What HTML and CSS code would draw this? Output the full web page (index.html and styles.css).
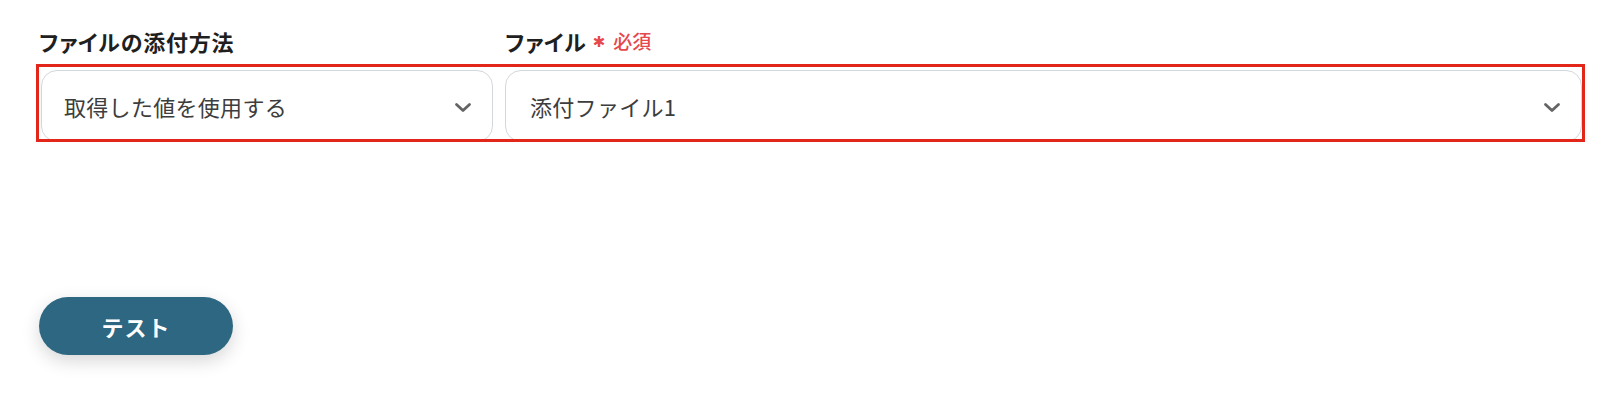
FILE: index.html
```html
<!DOCTYPE html>
<html lang="ja">
<head>
<meta charset="utf-8">
<link rel="stylesheet" href="styles.css">
</head>
<body>
<div class="page">
  <div class="labels">
    <div class="label label-method">ファイルの添付方法</div>
    <div class="label">ファイル<span class="req"><span class="star">✱</span>必須</span></div>
  </div>
  <div class="fields">
    <div class="select select-method">
      <span class="value">取得した値を使用する</span>
      <svg class="chev" width="18" height="11" viewBox="0 0 18 11"><path d="M2.5 2.5l6.5 6 6.5-6" fill="none" stroke="#646464" stroke-width="2.8" stroke-linecap="round" stroke-linejoin="round"/></svg>
    </div>
    <div class="select select-file">
      <span class="value">添付ファイル1</span>
      <svg class="chev" width="18" height="11" viewBox="0 0 18 11"><path d="M2.5 2.5l6.5 6 6.5-6" fill="none" stroke="#646464" stroke-width="2.8" stroke-linecap="round" stroke-linejoin="round"/></svg>
    </div>
  </div>
  <div class="actions">
    <button class="btn">テスト</button>
  </div>
</div>
</body>
</html>
```
FILE: styles.css
```css
* { box-sizing: border-box; }
html, body { margin: 0; padding: 0; background: #fff; }
body {
  font-family: "Noto Sans CJK JP", "Noto Sans", sans-serif;
  width: 1600px;
  height: 408px;
  overflow: hidden;
}
.page {
  padding: 28px 15px 0 36px;
  display: flex;
  flex-direction: column;
}
.labels {
  display: flex;
  align-items: center;
  height: 26px;
  padding-left: 3px;
  margin-bottom: 10px;
}
.label {
  font-size: 22px;
  font-weight: 700;
  color: #1f1f1f;
  line-height: 26px;
  font-feature-settings: "palt";
  letter-spacing: 0.8px;
  display: flex;
  align-items: center;
}
.label-method { width: 466px; }
.req {
  color: #e5484d;
  font-size: 19px;
  font-weight: 500;
  letter-spacing: 0;
  margin-left: 6px;
  display: flex;
  align-items: center;
}
.star {
  font-family: "DejaVu Sans", sans-serif;
  font-size: 15px;
  margin-right: 8px;
  line-height: 1;
  position: relative;
  top: 1px;
}
.fields {
  border: 3px solid #e2261a;
  height: 78px;
  padding: 3px 0 0 2px;
  display: grid;
  grid-template-columns: 452px 1fr;
  column-gap: 12px;
  overflow: hidden;
}
.select {
  height: 72px;
  border: 1.5px solid #d4d7dc;
  border-radius: 16px;
  display: flex;
  align-items: center;
  justify-content: space-between;
  padding: 0 20px 0 22px;
  background: #fff;
}
.select-file { padding-left: 24px; }
.value {
  font-size: 22px;
  color: #3d3d3d;
  letter-spacing: 0.3px;
}
.chev { flex: none; margin-top: 2px; }
.actions {
  margin-top: 155px;
  padding-left: 3px;
}
.btn {
  width: 194px;
  height: 58px;
  border: none;
  border-radius: 29px;
  background: #2e6781;
  color: #fff;
  font-family: inherit;
  font-size: 22px;
  font-weight: 700;
  letter-spacing: 1px;
  box-shadow: 0 6px 18px rgba(0, 0, 0, 0.16);
}
```
